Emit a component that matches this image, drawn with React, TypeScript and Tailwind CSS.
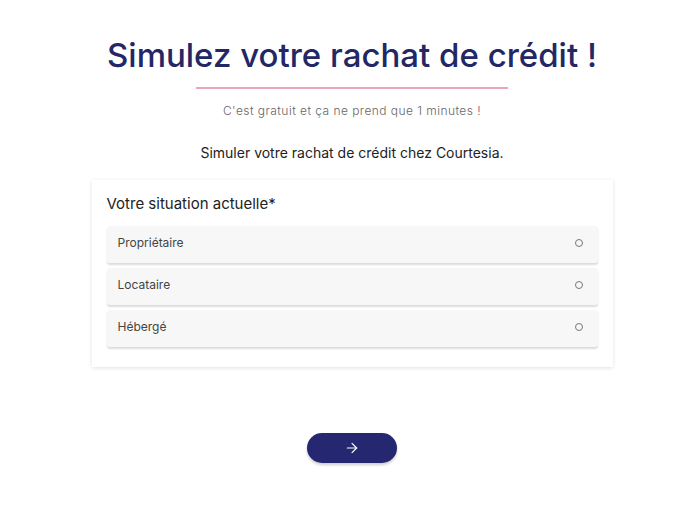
import { ArrowRight } from 'lucide-react';

const options = ['Propriétaire', 'Locataire', 'Hébergé'];

export default function App() {
  return (
    <main className="min-h-screen w-full bg-white pl-[14px] font-['Inter',sans-serif]">
      <div className="flex flex-col items-center pt-[33px]">
        <h1 className="text-[33px] leading-[44px] font-medium text-[#232766]">
          Simulez votre rachat de crédit !
        </h1>
        <div className="mt-[10px] h-[2px] w-[312px] bg-[#eba5b9]" />
        <p className="mt-[14px] text-[12px] leading-4 font-light tracking-[0.45px] text-[#666]">
          C&apos;est gratuit et ça ne prend que 1 minutes !
        </p>
        <p className="mt-[24px] text-[14px] leading-5 text-[#222]">
          Simuler votre rachat de crédit chez Courtesia.
        </p>
      </div>

      <section className="mx-auto mt-[17px] w-[521px] bg-white px-[15px] pt-[14px] pb-[20px] shadow-[0_1px_4px_rgba(0,0,0,0.12)]">
        <h2 className="text-[15px] leading-5 text-[#222]">Votre situation actuelle*</h2>
        <div className="mt-[12px] flex flex-col gap-[5px]">
          {options.map((o) => (
            <label
              key={o}
              className="flex h-[37px] items-center justify-between rounded-[3px] bg-[#f7f7f7] pb-[3px] pl-[11px] pr-[15px] shadow-[0_2px_2px_rgba(0,0,0,0.14)]"
            >
              <span className="text-[12px] text-[#444]">{o}</span>
              <span className="h-[8px] w-[8px] rounded-full border border-[#777]" />
            </label>
          ))}
        </div>
      </section>

      <div className="mt-[66px] flex justify-center">
        <button className="flex h-[30px] w-[90px] items-center justify-center rounded-full bg-[#252770] text-white shadow-[0_2px_3px_rgba(0,0,0,0.2)]">
          <ArrowRight size={16} strokeWidth={1.75} />
        </button>
      </div>
    </main>
  );
}
